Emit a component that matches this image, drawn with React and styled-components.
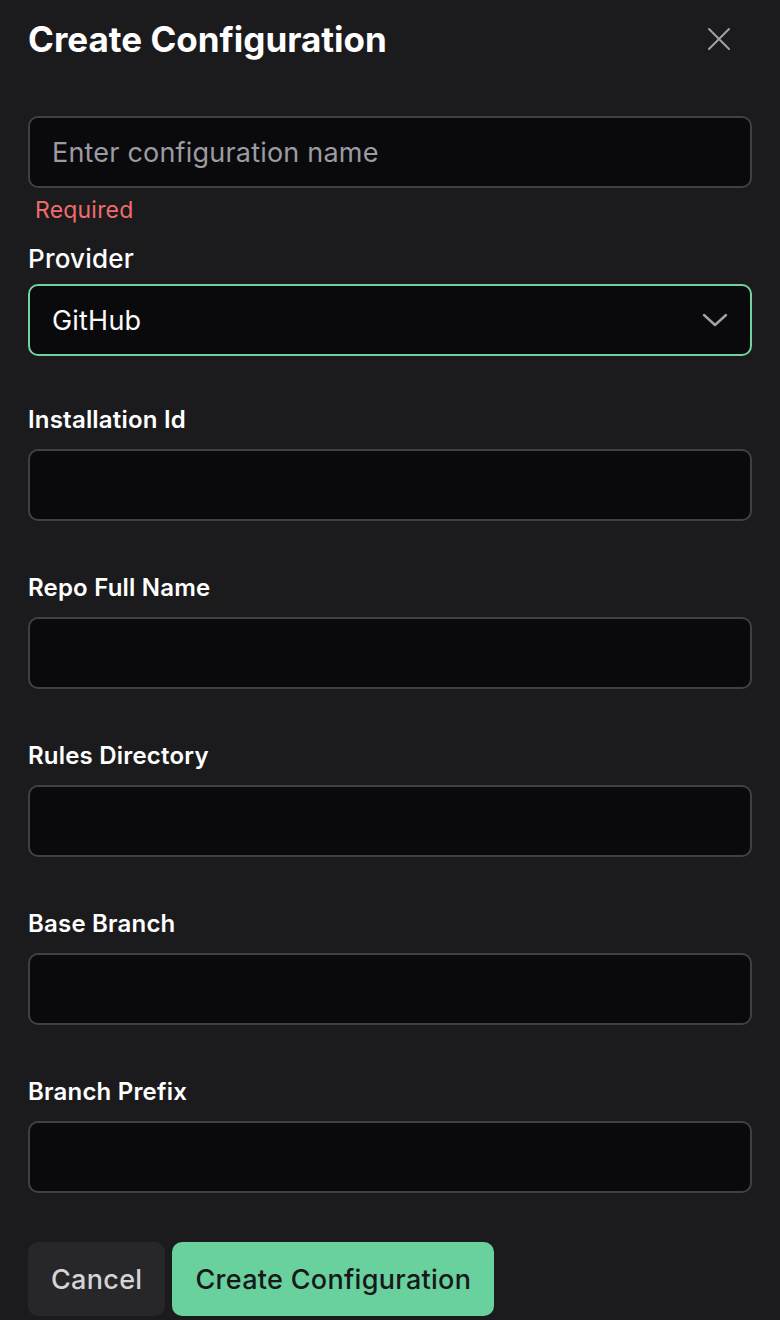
import React from "react";
import styled, { createGlobalStyle } from "styled-components";

const GlobalStyle = createGlobalStyle`
  html, body {
    margin: 0;
    padding: 0;
    background: #1b1b1e;
  }
  body {
    font-family: Inter, "Noto Sans", sans-serif;
    color: #fafafa;
  }
  * {
    box-sizing: border-box;
  }
`;

const Dialog = styled.div`
  width: 780px;
  min-height: 1320px;
  padding: 16px 28px 0 28px;
  background: #1b1b1e;
  display: flex;
  flex-direction: column;
`;

const Header = styled.div`
  display: flex;
  align-items: center;
  justify-content: space-between;
  height: 46px;
  margin-bottom: 54px;
`;

const Title = styled.h2`
  margin: 0;
  font-size: 35px;
  font-weight: 700;
  letter-spacing: 0;
  color: #ffffff;
`;

const CloseButton = styled.button`
  background: none;
  border: none;
  padding: 0;
  margin-right: 20px;
  width: 26px;
  height: 26px;
  display: flex;
  align-items: center;
  justify-content: center;
  color: #a1a1aa;
  cursor: pointer;
`;

const Input = styled.input`
  width: 100%;
  height: 72px;
  padding: 0 22px;
  background: #0a0a0c;
  border: 2px solid #3f3f46;
  border-radius: 10px;
  font-family: inherit;
  font-size: 27px;
  letter-spacing: 0.2px;
  color: #fafafa;
  outline: none;
  &::placeholder {
    color: #9b9ba3;
  }
`;

const ErrorText = styled.div`
  margin: 8px 0 0 7px;
  font-size: 23px;
  line-height: 28px;
  letter-spacing: 0.2px;
  color: #f06b6b;
`;

const Field = styled.div`
  display: flex;
  flex-direction: column;
  margin-top: ${(p) => p.top}px;
`;

const Label = styled.label`
  font-size: ${(p) => (p.big ? 26 : 24)}px;
  font-weight: ${(p) => (p.big ? 500 : 600)};
  line-height: ${(p) => (p.big ? 34 : 28)}px;
  letter-spacing: 0.2px;
  color: #ffffff;
  margin-bottom: ${(p) => (p.big ? 8 : 15)}px;
`;

const Select = styled.div`
  height: 72px;
  padding: 0 22px;
  background: #0a0a0c;
  border: 2px solid #6dd3a0;
  border-radius: 10px;
  display: flex;
  align-items: center;
  justify-content: space-between;
  font-size: 27px;
  letter-spacing: 0.2px;
  color: #fafafa;
  svg {
    color: #a1a1aa;
  }
`;

const Actions = styled.div`
  display: flex;
  gap: 7px;
  margin-top: 49px;
`;

const Button = styled.button`
  height: 74px;
  padding: 0 23px;
  border: none;
  border-radius: 10px;
  font-family: inherit;
  font-size: 27px;
  font-weight: 500;
  letter-spacing: 0.3px;
  background: ${(p) => (p.primary ? "#68d19e" : "#27272a")};
  color: ${(p) => (p.primary ? "#18181b" : "#d4d4d8")};
  cursor: pointer;
`;

const fields = [
  "Installation Id",
  "Repo Full Name",
  "Rules Directory",
  "Base Branch",
  "Branch Prefix",
];

export default function App() {
  return (
    <>
      <GlobalStyle />
      <Dialog>
        <Header>
          <Title>Create Configuration</Title>
          <CloseButton aria-label="Close">
            <svg width="24" height="24" viewBox="0 0 24 24" fill="none" stroke="currentColor" strokeWidth="2" strokeLinecap="round">
              <path d="M2 2L22 22M22 2L2 22" />
            </svg>
          </CloseButton>
        </Header>

        <Input placeholder="Enter configuration name" />
        <ErrorText>Required</ErrorText>

        <Field top={18}>
          <Label big>Provider</Label>
          <Select>
            <span>GitHub</span>
            <svg width="26" height="16" viewBox="0 0 26 16" fill="none" stroke="currentColor" strokeWidth="2.4" strokeLinecap="round" strokeLinejoin="round">
              <path d="M2 3L13 13L24 3" />
            </svg>
          </Select>
        </Field>

        {fields.map((name, i) => (
          <Field key={name} top={i === 0 ? 50 : 53}>
            <Label>{name}</Label>
            <Input />
          </Field>
        ))}

        <Actions>
          <Button>Cancel</Button>
          <Button primary>Create Configuration</Button>
        </Actions>
      </Dialog>
    </>
  );
}
